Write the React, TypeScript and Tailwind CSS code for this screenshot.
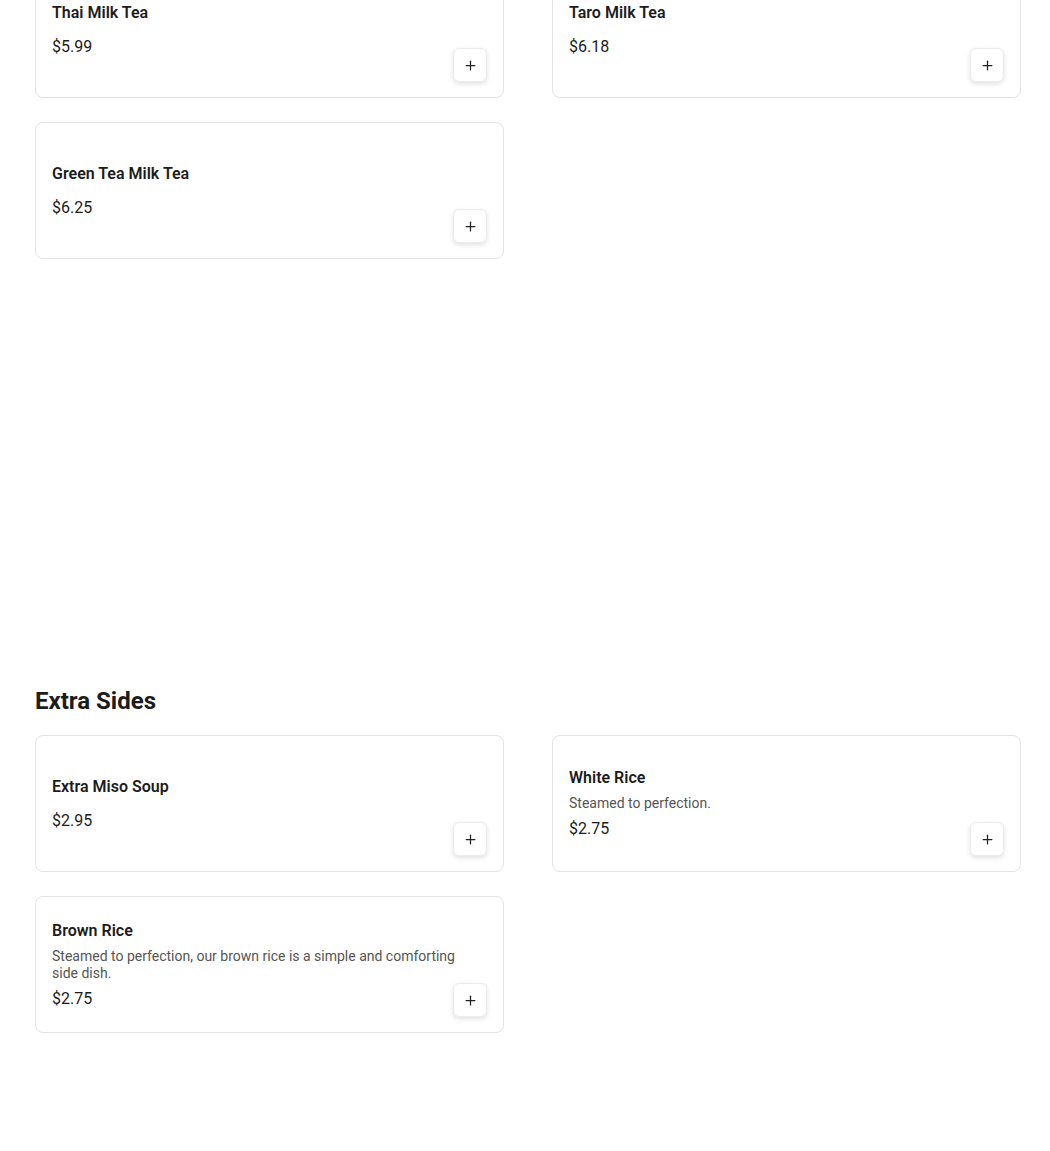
import { Plus } from 'lucide-react'

type Item = { name: string; price: string; desc?: string }

const milkTeas: Item[] = [
  { name: 'Thai Milk Tea', price: '$5.99' },
  { name: 'Taro Milk Tea', price: '$6.18' },
  { name: 'Green Tea Milk Tea', price: '$6.25' },
]

const extraSides: Item[] = [
  { name: 'Extra Miso Soup', price: '$2.95' },
  { name: 'White Rice', price: '$2.75', desc: 'Steamed to perfection.' },
  {
    name: 'Brown Rice',
    price: '$2.75',
    desc: 'Steamed to perfection, our brown rice is a simple and comforting side dish.',
  },
]

function MenuCard({ item }: { item: Item }) {
  return (
    <div className="relative h-[137px] bg-white border border-[#e3e3e3] rounded-lg px-4 flex flex-col justify-center">
      <div className="pr-6">
        <h3 className={`text-base leading-6 font-semibold text-[#1c1c1c] ${item.desc ? 'mb-[5px]' : 'mb-[10px]'}`}>
          {item.name}
        </h3>
        {item.desc && (
          <p className="text-sm leading-[17px] text-[#555] mb-[5px]">{item.desc}</p>
        )}
        <div className="text-base leading-6 text-[#1c1c1c]">{item.price}</div>
      </div>
      <button className="absolute right-4 bottom-[15px] w-[34px] h-[34px] flex items-center justify-center bg-white border border-[#ececec] rounded-md shadow-[0_2px_5px_rgba(0,0,0,0.12)] text-[#222]">
        <Plus size={15} strokeWidth={2} />
      </button>
    </div>
  )
}

export default function App() {
  return (
    <div className="h-[1151px] overflow-hidden bg-white" style={{ fontFamily: 'Roboto, "Liberation Sans", sans-serif' }}>
      <div className="-mt-[39px] px-[35px]">
        {/* milk tea */}
        <section className="h-[724px]">
          <div className="grid grid-cols-[469px_469px] gap-x-12 gap-y-6">
            {milkTeas.map(i => <MenuCard key={i.name} item={i} />)}
          </div>
        </section>

        {/* extra sides */}
        <section>
          <h2 className="text-2xl leading-8 font-bold text-[#1c1c1c] mb-[18px]">Extra Sides</h2>
          <div className="grid grid-cols-[469px_469px] gap-x-12 gap-y-6">
            {extraSides.map(i => <MenuCard key={i.name} item={i} />)}
          </div>
        </section>
      </div>
    </div>
  )
}
